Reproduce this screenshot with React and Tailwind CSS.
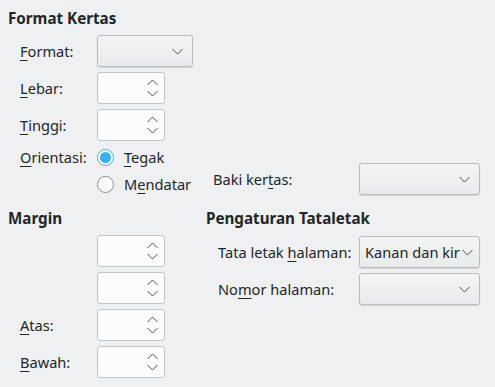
import React from 'react';

const font = { fontFamily: '"Noto Sans", sans-serif' };

function Mn({ children }) {
    return <span className="underline underline-offset-[3px] decoration-1">{children}</span>;
}

function Chevron({ up }) {
    return (
        <svg width="11" height="7" viewBox="0 0 11 7" className="block shrink-0">
            <path d={up ? "M0.5 6 L5.5 1 L10.5 6" : "M0.5 1 L5.5 6 L10.5 1"} fill="none" stroke="#4d4d4d" strokeWidth="1" />
        </svg>
    );
}

function Combo({ width, text }) {
    return (
        <div
            className={`h-[32px] rounded-[3px] border border-[#b9bbbc] bg-gradient-to-b from-[#f3f4f4] to-[#e9eaeb] shadow-[0_1px_1px_rgba(0,0,0,0.12)] flex items-center ${text ? 'pl-[5px] pr-[6px]' : 'pl-[6px] pr-[9px]'}`}
            style={{ width }}
        >
            <span className="flex-1 whitespace-nowrap">{text}</span>
            <Chevron />
        </div>
    );
}

function Spin() {
    return (
        <div className="w-[68px] h-[32px] rounded-[3px] border border-[#c3c5c6] bg-[#fcfcfc] flex items-center justify-end pr-[6px]">
            <div className="flex flex-col gap-[4px]">
                <Chevron up />
                <Chevron />
            </div>
        </div>
    );
}

function Radio({ checked, children }) {
    return (
        <div className="h-[27px] flex items-center gap-[10px]">
            {checked ? (
                <div className="w-[17px] h-[17px] rounded-full border border-[#3daee9] bg-white flex items-center justify-center">
                    <div className="w-[11px] h-[11px] rounded-full bg-[#3daee9]" />
                </div>
            ) : (
                <div className="w-[17px] h-[17px] rounded-full border border-[#8a8c8e] bg-[#fcfcfc]" />
            )}
            <span>{children}</span>
        </div>
    );
}

function Row({ label, children, labelWidth = 'w-[77px]' }) {
    return (
        <div className="flex items-center">
            <div className={labelWidth}>{label}</div>
            {children}
        </div>
    );
}

export default function App() {
    return (
        <div className="w-[495px] h-[387px] bg-[#eff0f1] text-[#232627] text-[14.6px] leading-[19px] overflow-hidden" style={font}>
            <div className="pl-2 pt-[9px]">
                <div className="font-bold text-[15.2px]">Format Kertas</div>
                <div className="mt-[7px] pl-3 flex flex-col gap-[5px]">
                    <Row label={<><Mn>F</Mn>ormat:</>}><Combo width={96} /></Row>
                    <Row label={<><Mn>L</Mn>ebar:</>}><Spin /></Row>
                    <Row label={<><Mn>T</Mn>inggi:</>}><Spin /></Row>
                </div>
                <div className="flex mt-[3px]">
                    <div className="w-[198px] pl-3 flex">
                        <div className="w-[77px] h-[27px] flex items-center"><span><Mn>O</Mn>rientasi:</span></div>
                        <div className="flex flex-col">
                            <Radio checked><Mn>T</Mn>egak</Radio>
                            <Radio>M<Mn>e</Mn>ndatar</Radio>
                        </div>
                    </div>
                    <div className="flex items-end pb-[3px]">
                        <div className="flex items-center">
                            <div className="w-[153px] pl-[7px]">Baki ker<Mn>t</Mn>as:</div>
                            <Combo width={121} />
                        </div>
                    </div>
                </div>
                <div className="flex mt-[11px]">
                    <div className="w-[198px]">
                        <div className="font-bold text-[15.2px]">Margin</div>
                        <div className="mt-[7px] pl-3 flex flex-col gap-[5px]">
                            <Row label=""><Spin /></Row>
                            <Row label=""><Spin /></Row>
                            <Row label={<><Mn>A</Mn>tas:</>}><Spin /></Row>
                            <Row label={<><Mn>B</Mn>awah:</>}><Spin /></Row>
                        </div>
                    </div>
                    <div>
                        <div className="font-bold text-[15.2px]">Pengaturan Tataletak</div>
                        <div className="mt-[8px] pl-3 flex flex-col gap-[5px]">
                            <Row label={<>Tata letak <Mn>h</Mn>alaman:</>} labelWidth="w-[141px]">
                                <Combo width={121} text="Kanan dan kir" />
                            </Row>
                            <Row label={<>No<Mn>m</Mn>or halaman:</>} labelWidth="w-[141px]">
                                <Combo width={121} />
                            </Row>
                        </div>
                    </div>
                </div>
            </div>
        </div>
    );
}
